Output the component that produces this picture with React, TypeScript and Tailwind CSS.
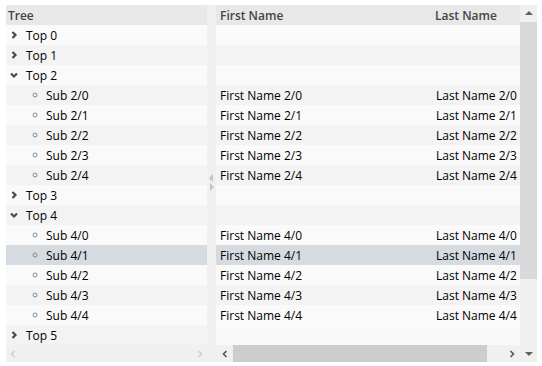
const rows: { label: string; sub: boolean; open?: boolean; first?: string; last?: string }[] = [
  { label: "Top 0", sub: false },
  { label: "Top 1", sub: false },
  { label: "Top 2", sub: false, open: true },
  ...[0, 1, 2, 3, 4].map((i) => ({ label: `Sub 2/${i}`, sub: true, first: `First Name 2/${i}`, last: `Last Name 2/${i}` })),
  { label: "Top 3", sub: false },
  { label: "Top 4", sub: false, open: true },
  ...[0, 1, 2, 3, 4].map((i) => ({ label: `Sub 4/${i}`, sub: true, first: `First Name 4/${i}`, last: `Last Name 4/${i}` })),
  { label: "Top 5", sub: false },
];

const SELECTED = 11;

const rowBg = (i: number) => (i === SELECTED ? "bg-[#d5dbe1]" : i % 2 === 0 ? "bg-[#fafafa]" : "bg-[#f3f3f3]");

const Chevron = ({ open }: { open?: boolean }) => (
  <svg width="8" height="8" viewBox="0 0 8 8" className="shrink-0">
    {open ? (
      <polyline points="1,2.5 4,5.5 7,2.5" fill="none" stroke="#4a4a4a" strokeWidth="2.2" />
    ) : (
      <polyline points="2.5,1 5.5,4 2.5,7" fill="none" stroke="#4a4a4a" strokeWidth="2.2" />
    )}
  </svg>
);

const Arrow = ({ dir, color }: { dir: "l" | "r"; color: string }) => (
  <svg width="8" height="8" viewBox="0 0 8 8">
    {dir === "l" ? (
      <polyline points="5.5,1 2.5,4 5.5,7" fill="none" stroke={color} strokeWidth="1.6" />
    ) : (
      <polyline points="2.5,1 5.5,4 2.5,7" fill="none" stroke={color} strokeWidth="1.6" />
    )}
  </svg>
);

const Tri = ({ dir, color }: { dir: "u" | "d" | "l" | "r"; color: string }) => {
  const pts = { u: "0,5 4,1 8,5", d: "0,2 4,6 8,2", l: "5,0 1,4 5,8", r: "2,0 6,4 2,8" }[dir];
  return (
    <svg width="8" height="8" viewBox="0 0 8 8">
      <polygon points={pts} fill={color} />
    </svg>
  );
};

export default function App() {
  return (
    <div className="w-[542px] h-[366px] bg-white pt-[5px] pl-[6px] text-[12px] text-black font-['Open_Sans',sans-serif]">
      <div className="flex h-[357px]">
        {/* Tree panel */}
        <div className="w-[201px] flex flex-col bg-[#f9f9f9]">
          <div className="h-[20px] bg-[#e8e8e8] flex items-center pt-[2px] pl-[2px] font-semibold text-[#444]">Tree</div>
          {rows.map((r, i) => (
            <div key={i} className={`h-[20px] flex items-center pt-[2px] ${rowBg(i)} ${r.sub ? "pl-[26px]" : "pl-[4px]"}`}>
              {r.sub ? (
                <svg width="6" height="6" viewBox="0 0 6 6" className="shrink-0 -mt-[2px]">
                  <circle cx="3" cy="3" r="2" fill="none" stroke="#888" strokeWidth="1" />
                </svg>
              ) : (
                <span className="-mt-[2px] flex">
                  <Chevron open={r.open} />
                </span>
              )}
              <span className="ml-[8px]">{r.label}</span>
            </div>
          ))}
          <div className="h-[17px] bg-[#f0f0f0] flex items-center justify-between px-[3px]">
            <Arrow dir="l" color="#cfcfcf" />
            <Arrow dir="r" color="#cfcfcf" />
          </div>
        </div>

        {/* Splitter */}
        <div className="w-[9px] bg-[#f0f0f0] flex flex-col items-center justify-center gap-[1px] pb-[2px]">
          <Tri dir="l" color="#c4c4c4" />
          <Tri dir="r" color="#c4c4c4" />
        </div>

        {/* Grid panel */}
        <div className="w-[304px] flex flex-col bg-[#f9f9f9]">
          <div className="h-[20px] bg-[#e8e8e8] flex items-center pt-[2px] font-semibold text-[#444]">
            <span className="pl-[4px] w-[219px]">First Name</span>
            <span>Last Name</span>
          </div>
          {rows.slice(0, 15).map((r, i) => (
            <div key={i} className={`h-[20px] flex items-center pt-[2px] ${rowBg(i)}`}>
              <span className="pl-[4px] w-[220px]">{r.first ?? ""}</span>
              <span>{r.last ?? ""}</span>
            </div>
          ))}
          <div className="h-[20px]" />
          <div className="h-[17px] bg-[#f0f0f0] flex items-center">
            <div className="w-[17px] flex justify-center">
              <Arrow dir="l" color="#555" />
            </div>
            <div className="w-[254px] h-[17px] bg-[#cdcdcd]" />
            <div className="flex-1" />
            <div className="w-[17px] flex justify-center">
              <Arrow dir="r" color="#555" />
            </div>
          </div>
        </div>

        {/* Vertical scrollbar */}
        <div className="w-[17px] bg-[#f0f0f0] flex flex-col">
          <div className="h-[17px] flex items-center justify-center">
            <Tri dir="u" color="#606060" />
          </div>
          <div className="h-[257px] bg-[#d9d9d9]" />
          <div className="flex-1" />
          <div className="h-[17px] flex items-center justify-center">
            <Tri dir="d" color="#606060" />
          </div>
        </div>
      </div>
    </div>
  );
}
